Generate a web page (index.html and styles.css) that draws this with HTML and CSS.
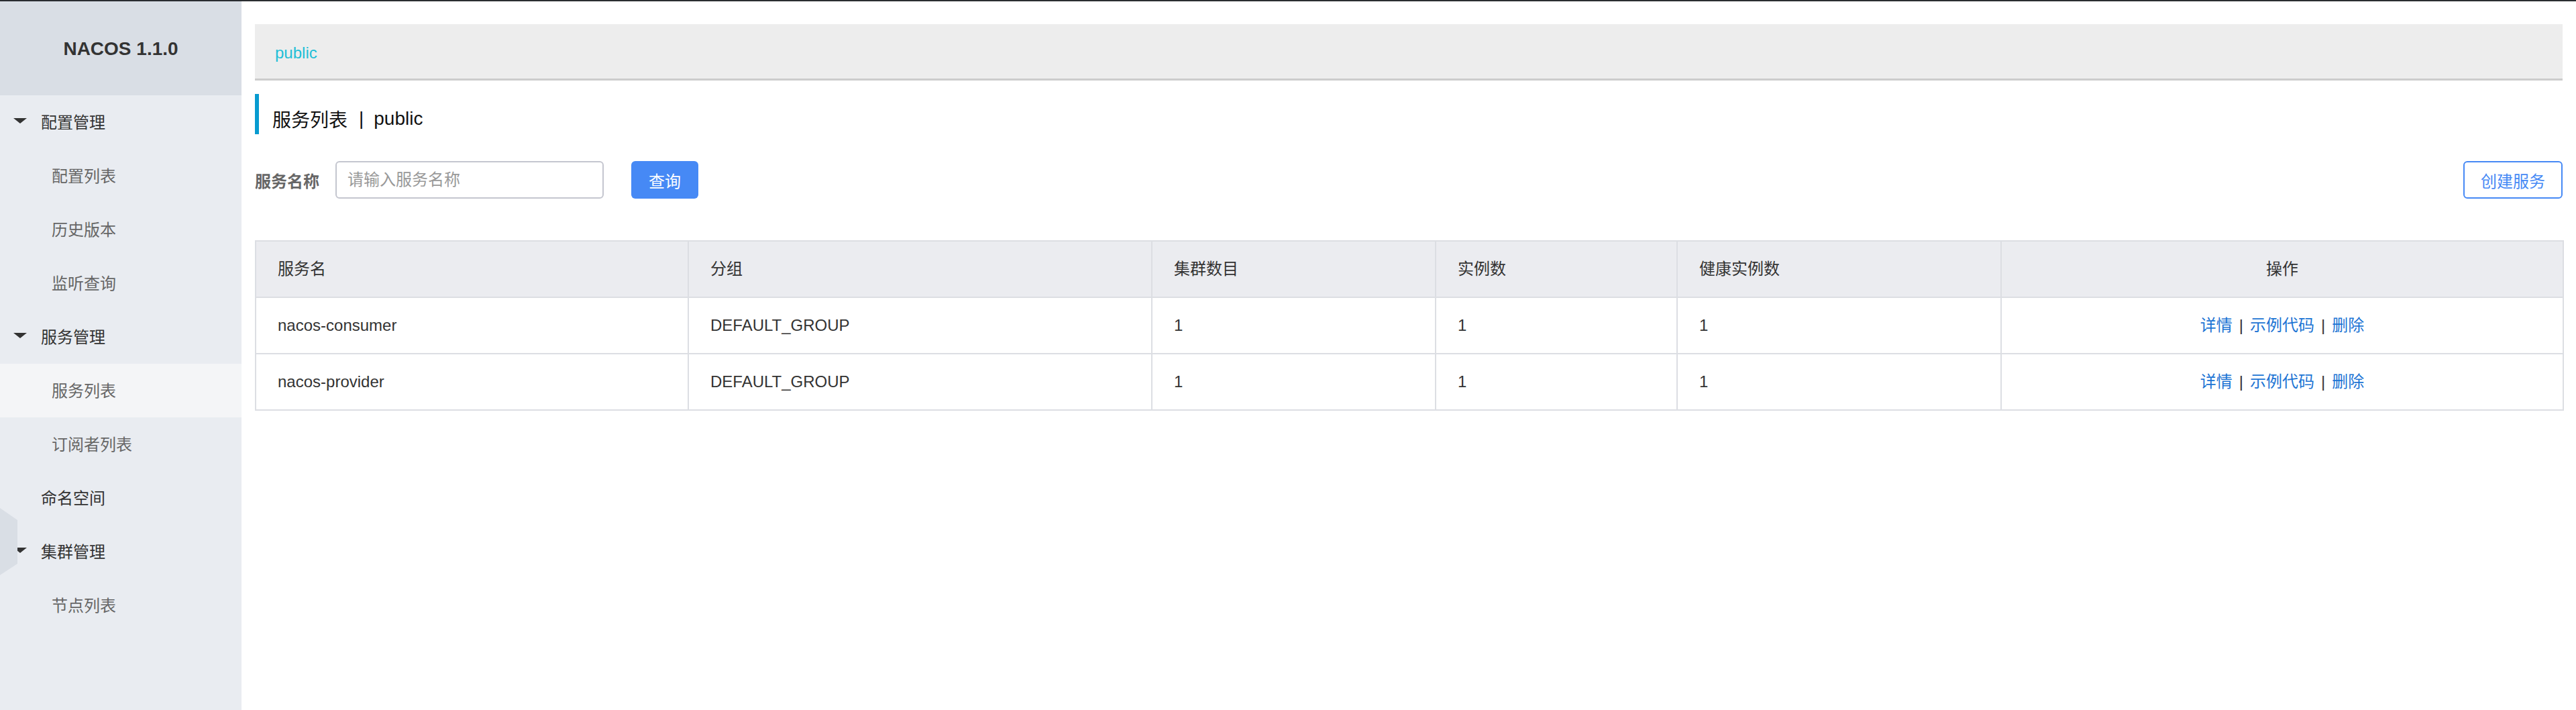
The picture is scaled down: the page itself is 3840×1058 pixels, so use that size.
FILE: index.html
```html
<!DOCTYPE html>
<html lang="zh-CN">
<head>
<meta charset="utf-8">
<title>Nacos</title>
<link rel="stylesheet" href="styles.css">
</head>
<body>
<div class="topline"></div>
<div class="app">
  <aside class="sidebar">
    <div class="brand">NACOS 1.1.0</div>
    <nav class="menu">
      <div class="menu-group"><span class="caret"></span><span>配置管理</span></div>
      <div class="menu-item">配置列表</div>
      <div class="menu-item">历史版本</div>
      <div class="menu-item">监听查询</div>
      <div class="menu-group"><span class="caret"></span><span>服务管理</span></div>
      <div class="menu-item active">服务列表</div>
      <div class="menu-item">订阅者列表</div>
      <div class="menu-group plain"><span>命名空间</span></div>
      <div class="menu-group"><span class="caret"></span><span>集群管理</span></div>
      <div class="menu-item">节点列表</div>
    </nav>
    <svg class="handle" width="26" height="100" viewBox="0 0 26 100"><polygon points="0,0 26,18 26,83 0,100" fill="#d9dee5"/></svg>
  </aside>
  <main class="main">
    <div class="breadcrumb"><span class="crumb">public</span></div>
    <div class="page-title"><span>服务列表</span><span class="title-sep">|</span><span>public</span></div>
    <div class="search-row">
      <div class="search-form">
        <label class="search-label">服务名称</label>
        <input class="search-input" type="text" placeholder="请输入服务名称">
        <button class="btn btn-primary">查询</button>
      </div>
      <button class="btn btn-outline">创建服务</button>
    </div>
    <table class="grid">
      <colgroup>
        <col class="c1"><col class="c2"><col class="c3"><col class="c4"><col class="c5"><col class="c6">
      </colgroup>
      <thead>
        <tr><th>服务名</th><th>分组</th><th>集群数目</th><th>实例数</th><th>健康实例数</th><th class="center">操作</th></tr>
      </thead>
      <tbody>
        <tr><td>nacos-consumer</td><td>DEFAULT_GROUP</td><td>1</td><td>1</td><td>1</td><td class="center"><a class="link">详情</a><span class="op-sep">|</span><a class="link">示例代码</a><span class="op-sep">|</span><a class="link">删除</a></td></tr>
        <tr><td>nacos-provider</td><td>DEFAULT_GROUP</td><td>1</td><td>1</td><td>1</td><td class="center"><a class="link">详情</a><span class="op-sep">|</span><a class="link">示例代码</a><span class="op-sep">|</span><a class="link">删除</a></td></tr>
      </tbody>
    </table>
  </main>
</div>
</body>
</html>
```
FILE: styles.css
```css
* { box-sizing: border-box; }
html, body { margin: 0; padding: 0; height: 100%; }
body {
  font-family: "Liberation Sans", "Noto Sans CJK SC", sans-serif;
  font-size: 24px;
  color: #333;
  background: #fff;
  overflow: hidden;
}
.topline { height: 2px; background: #2a2d31; }
.app { display: flex; height: 1056px; }

.sidebar {
  position: relative;
  width: 360px;
  flex: 0 0 360px;
  background: #e9ecf1;
}
.brand {
  height: 140px;
  background: #d9dee5;
  display: flex;
  align-items: center;
  justify-content: center;
  font-weight: bold;
  font-size: 28px;
  color: #333;
  padding-top: 2px;
}
.menu { display: flex; flex-direction: column; }
.menu-group {
  height: 80px;
  display: flex;
  align-items: center;
  padding-left: 20px;
  padding-bottom: 4px;
  color: #333;
  font-size: 24px;
}
.menu-group.plain { padding-left: 61px; }
.caret {
  width: 0; height: 0;
  border-left: 10px solid transparent;
  border-right: 10px solid transparent;
  border-top: 8px solid #333;
  margin-right: 21px;
  margin-top: 0;
}
.menu-item {
  height: 80px;
  display: flex;
  align-items: center;
  padding-left: 77px;
  padding-bottom: 4px;
  color: #666;
  font-size: 24px;
}
.menu-item.active { background: #f4f5f7; }
.handle { position: absolute; left: 0; top: 755px; display: block; }

.main { flex: 1; padding: 0 20px; min-width: 0; }
.breadcrumb {
  margin-top: 34px;
  height: 84px;
  background: #ededed;
  border-bottom: 3px solid #cccccc;
  display: flex;
  align-items: center;
  padding: 4px 0 0 30px;
}
.crumb { color: #22bfd7; font-size: 24px; }
.page-title {
  margin-top: 20px;
  height: 60px;
  border-left: 6px solid #079bd0;
  padding: 14px 0 0 20px;
  display: flex;
  align-items: center;
  font-size: 28px;
  color: #111;
}
.title-sep { padding: 0 15px 0 17px; }

.search-row {
  margin-top: 40px;
  height: 56px;
  display: flex;
  align-items: center;
  justify-content: space-between;
}
.search-form { display: flex; align-items: center; }
.search-label { font-size: 24px; font-weight: bold; color: #666; width: 120px; }
.search-input {
  width: 400px;
  height: 56px;
  border: 2px solid #c4c6cf;
  border-radius: 6px;
  padding: 0 16px;
  font-family: "Liberation Sans", "Noto Sans CJK SC", sans-serif;
  font-size: 24px;
  color: #333;
  outline: none;
}
.search-input::placeholder { color: #999; }
.btn {
  height: 56px;
  border-radius: 6px;
  font-family: "Liberation Sans", "Noto Sans CJK SC", sans-serif;
  font-size: 24px;
  padding: 0;
  cursor: pointer;
}
.btn-primary {
  margin-left: 41px;
  width: 100px;
  background: #4689f5;
  border: none;
  color: #fff;
}
.btn-outline {
  width: 148px;
  background: #fff;
  border: 2px solid #4689f5;
  color: #4689f5;
}

.grid {
  margin-top: 62px;
  width: 100%;
  border-collapse: collapse;
  table-layout: fixed;
  border: 2px solid #dcdee3;
}
.c1 { width: 645px; }
.c2 { width: 691px; }
.c3 { width: 423px; }
.c4 { width: 360px; }
.c5 { width: 483px; }
.c6 { width: 838px; }
.grid th, .grid td {
  border: 2px solid #dcdee3;
  height: 84px;
  line-height: 30px;
  padding: 0 32px;
  text-align: left;
  font-size: 24px;
  font-weight: normal;
  color: #333;
  white-space: nowrap;
}
.grid th { background: #ebecf0; }
.grid .center { text-align: center; }
.link { color: #1c74d4; text-decoration: none; }
.op-sep { margin: 0 10px; color: #333; }
```
